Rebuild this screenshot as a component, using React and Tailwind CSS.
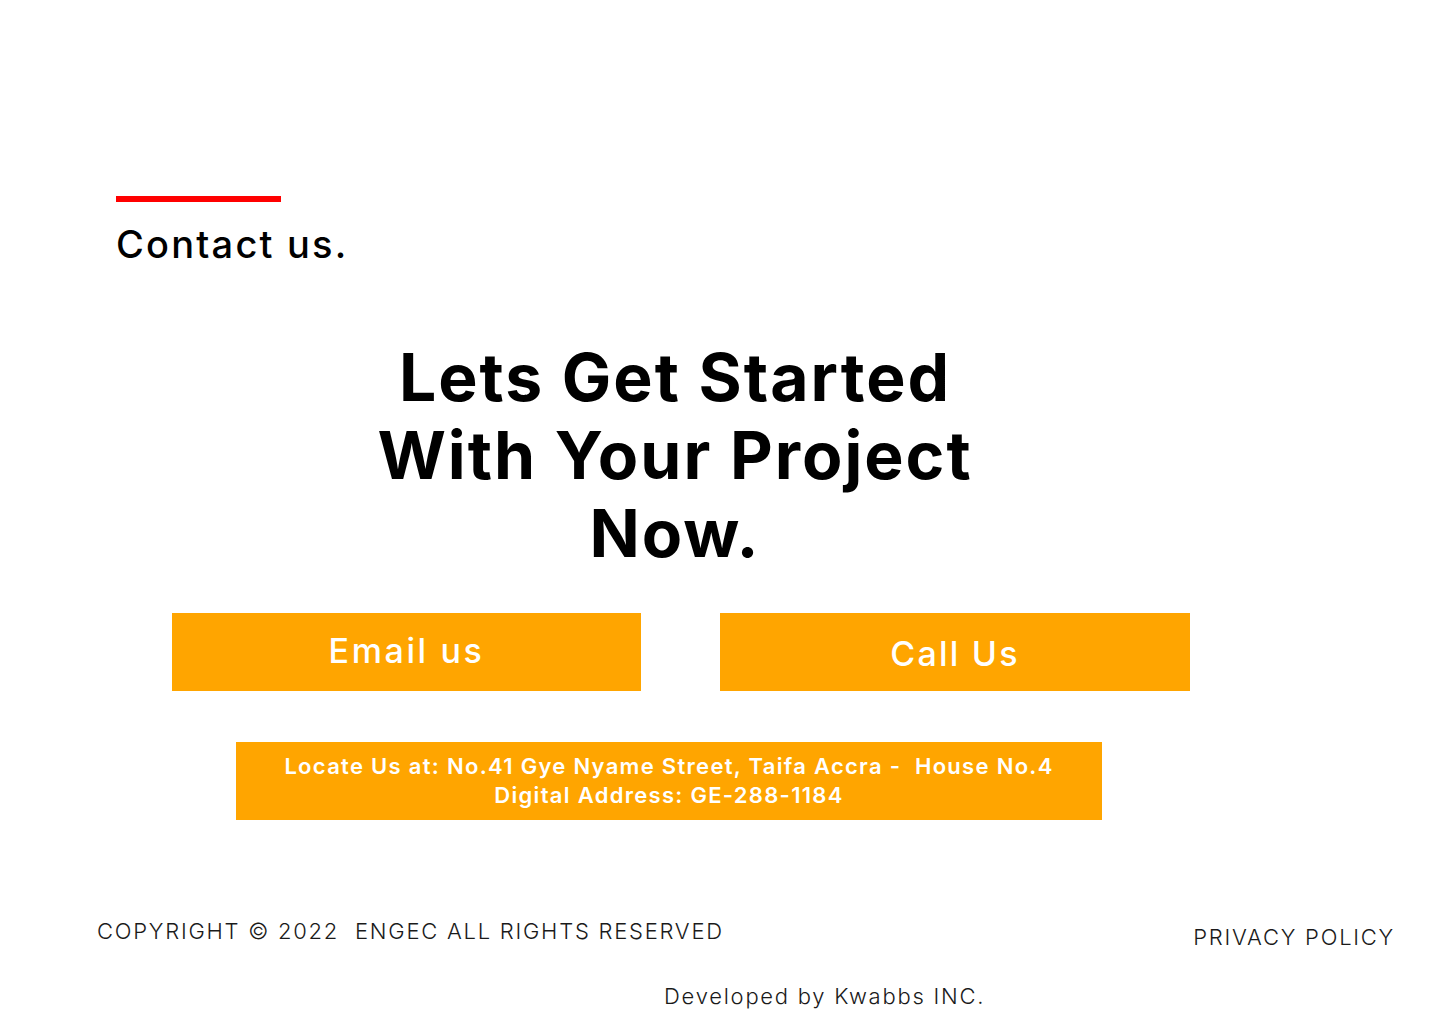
import React from "react";

function App() {
  return (
    <div className="w-[1440px] h-[1024px] bg-white text-black font-['Inter',sans-serif] overflow-hidden">
      {/* heading block */}
      <section className="pt-[196px] pl-[116px]">
        <div className="w-[165px] h-[6px] bg-[#ff0000]" />
        <h2 className="mt-[19px] text-[38px] leading-[46px] font-medium tracking-[2.2px]">Contact us.</h2>
      </section>

      <section className="mt-[71px] pr-[90px] flex justify-center">
        <h1 className="text-[66px] leading-[78px] font-bold text-center tracking-[2px]">
          Lets Get Started
          <br />
          With Your Project
          <br />
          Now.
        </h1>
      </section>

      {/* actions */}
      <section className="mt-[41px] pl-[172px] flex gap-[79px]">
        <a href="#" className="w-[469px] h-[78px] bg-[#ffa500] text-white flex items-center justify-center pb-[4px] text-[34px] font-medium tracking-[2.6px]">
          Email us
        </a>
        <a href="#" className="w-[470px] h-[78px] bg-[#ffa500] text-white flex items-center justify-center pt-[2px] text-[34px] font-medium tracking-[2.2px]">
          Call Us
        </a>
      </section>

      <section className="mt-[51px] pl-[236px]">
        <div className="w-[866px] h-[78px] bg-[#ffa500] text-white flex flex-col items-center justify-center text-[22px] leading-[29px] font-semibold text-center tracking-[1.3px]">
          <p>Locate Us at: No.41 Gye Nyame Street, Taifa Accra -&nbsp; House No.4</p>
          <p>Digital Address: GE-288-1184</p>
        </div>
      </section>

      {/* footer */}
      <footer className="mt-[96px] text-[22px] font-light text-[#1a1a1a] tracking-[1.75px]">
        <div className="flex justify-between pl-[97px] pr-[45px]">
          <p className="leading-[30px]">COPYRIGHT © 2022&nbsp; ENGEC ALL RIGHTS RESERVED</p>
          <p className="mt-[6px] leading-[30px]">PRIVACY POLICY</p>
        </div>
        <p className="mt-[29px] pl-[664px] leading-[30px]">Developed by Kwabbs INC.</p>
      </footer>
    </div>
  );
}

export default App;
